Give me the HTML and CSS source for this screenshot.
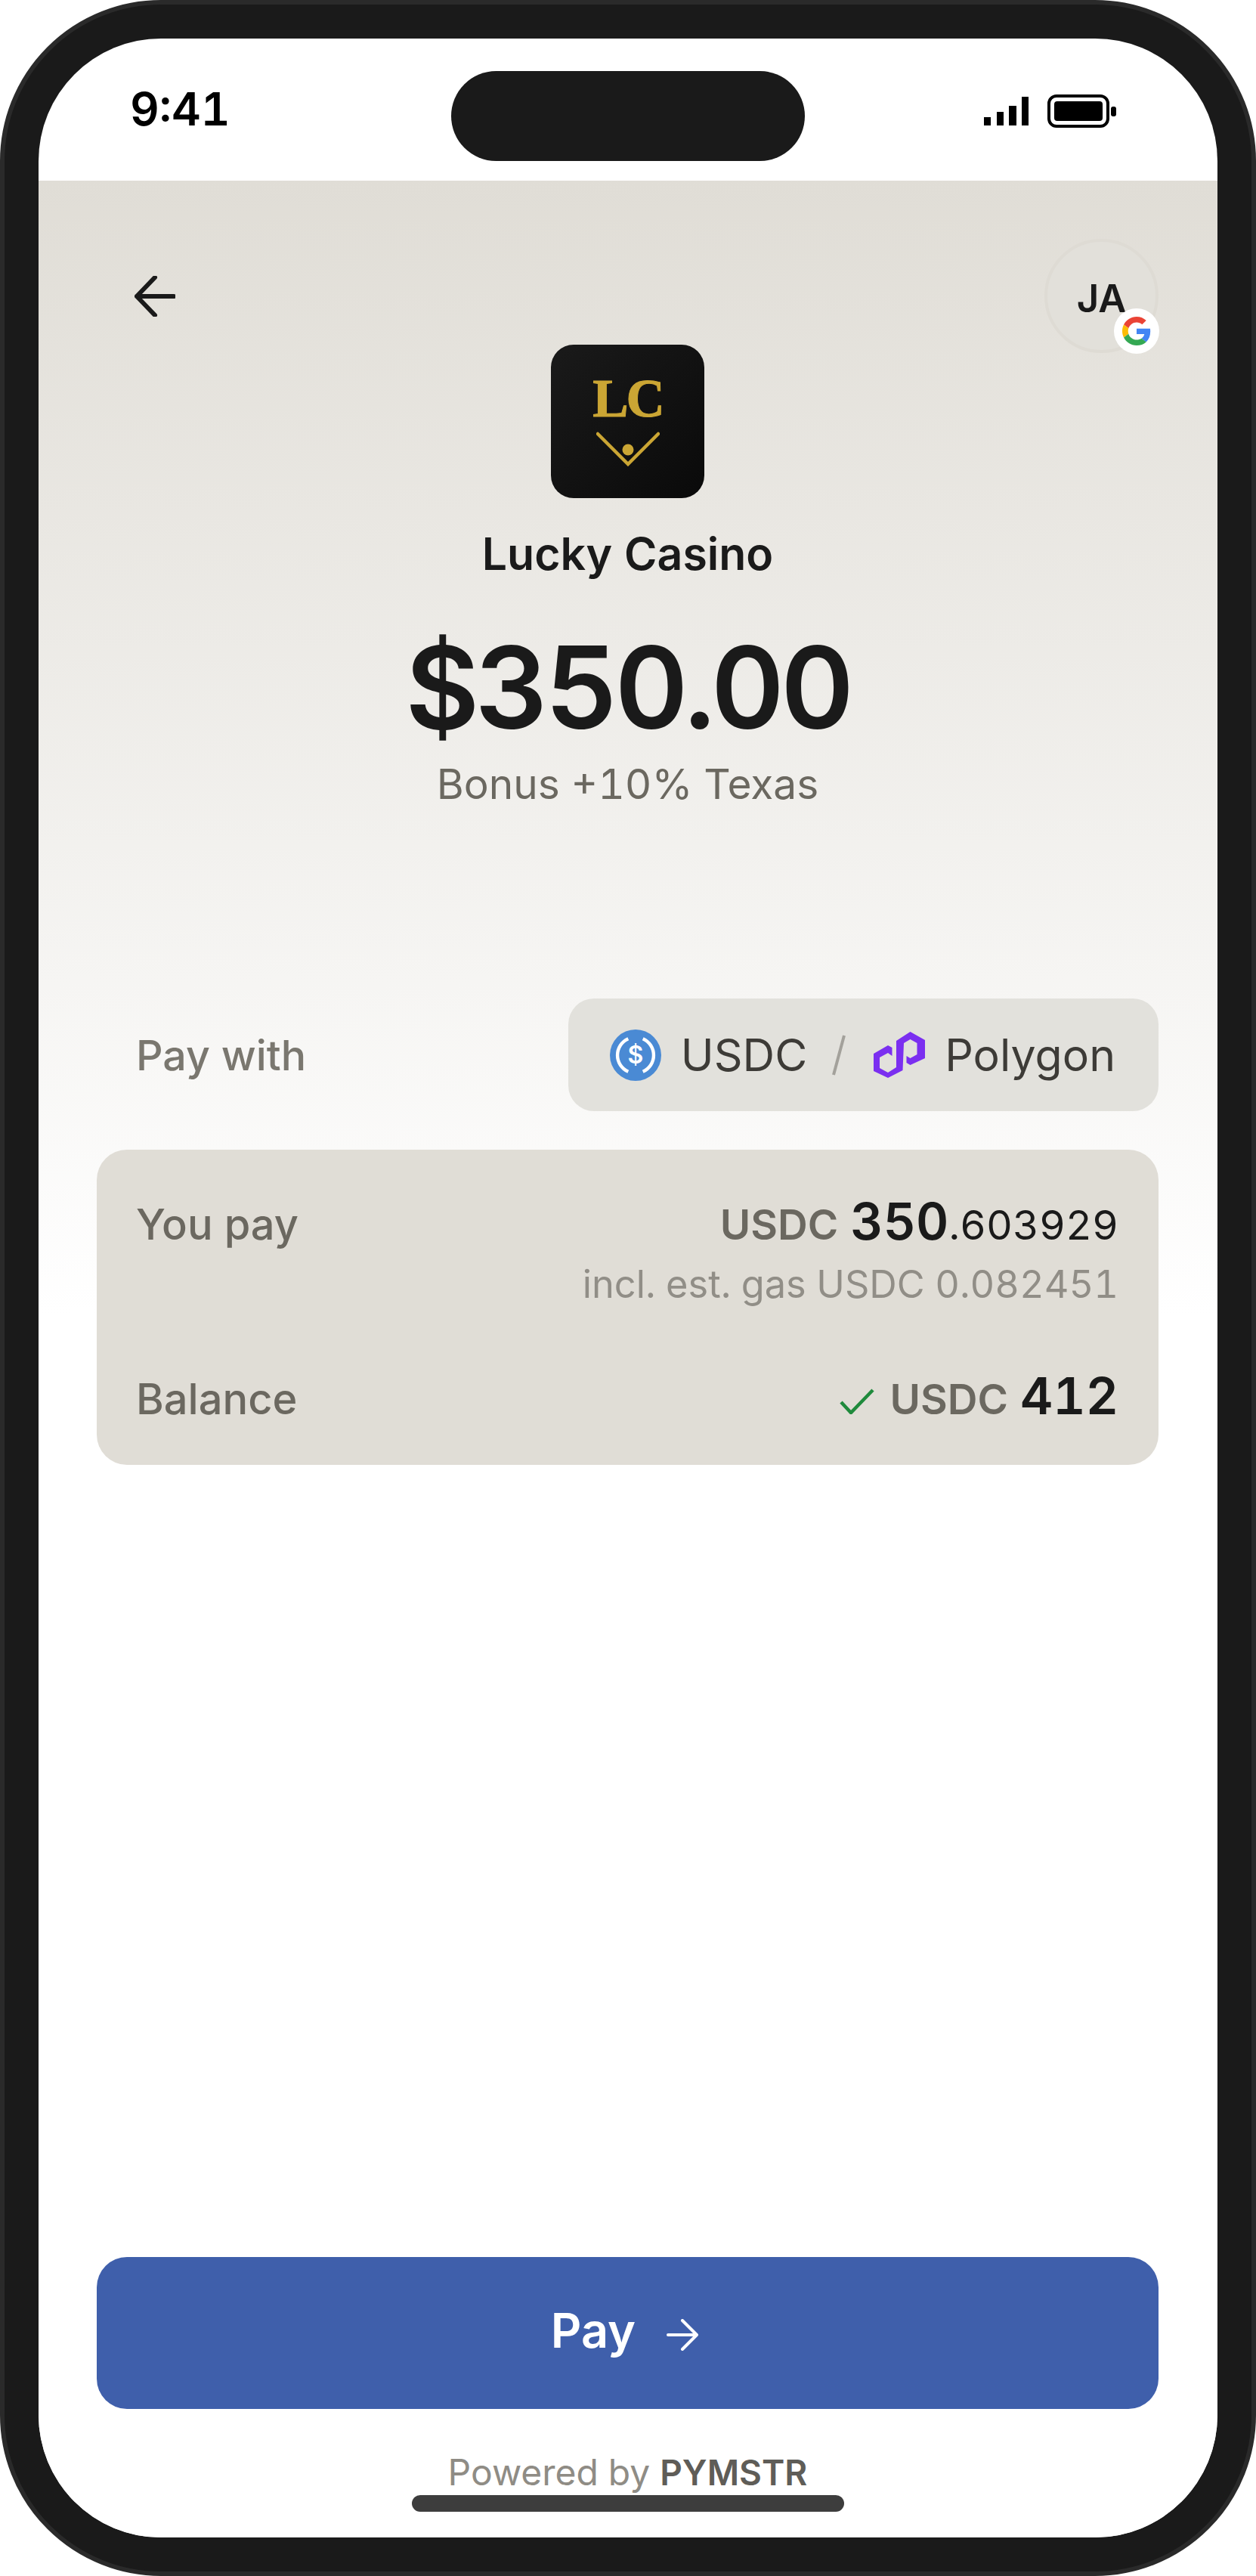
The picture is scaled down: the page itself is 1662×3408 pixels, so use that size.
FILE: index.html
```html
<!DOCTYPE html>
<html lang="en">
<head>
    <meta charset="UTF-8">
    <meta name="viewport" content="width=device-width, initial-scale=1.0">
    <title>Lucky Casino - Pay with PYMSTR</title>
    <link rel="stylesheet" href="styles.css">
</head>
<body>

<div class="phone">
    <div class="screen">
        <div class="status-bar">
            <span class="status-time">9:41</span>
            <div class="island"></div>
            <div class="status-icons">
                <svg class="signal-icon" width="60" height="40" viewBox="0 0 60 40">
                    <rect x="0" y="28" width="9" height="11" fill="#000"/>
                    <rect x="17" y="21" width="9" height="18" fill="#000"/>
                    <rect x="33" y="13" width="10" height="26" fill="#000"/>
                    <rect x="50" y="1" width="9" height="38" fill="#000"/>
                </svg>
                <svg class="battery-icon" width="91" height="44" viewBox="0 0 91 44">
                    <rect x="2" y="2" width="78" height="40" rx="10" fill="none" stroke="#000" stroke-width="4"/>
                    <rect x="9" y="9" width="64" height="26" rx="4" fill="#000"/>
                    <rect x="84" y="16" width="7" height="13" rx="3" fill="#000"/>
                </svg>
            </div>
        </div>

        <div class="checkout">
            <div class="top-row">
                <a class="back-link" href="javascript:void(0);">
                    <svg width="54" height="54" viewBox="0 0 54 54" fill="none" stroke="#1a1a1a" stroke-width="6" stroke-linecap="round" stroke-linejoin="round">
                        <path d="M52 27H3M27 2L3 27l24 25"/>
                    </svg>
                </a>
                <div class="avatar">
                    JA
                    <span class="google-badge">
                        <svg width="38" height="38" viewBox="0 0 48 48">
                            <path fill="#EA4335" d="M24 9.5c3.54 0 6.71 1.22 9.21 3.6l6.85-6.85C35.9 2.38 30.47 0 24 0 14.62 0 6.51 5.38 2.56 13.22l7.98 6.19C12.43 13.72 17.74 9.5 24 9.5z"/>
                            <path fill="#4285F4" d="M46.98 24.55c0-1.57-.15-3.09-.38-4.55H24v9.02h12.94c-.58 2.96-2.26 5.48-4.78 7.18l7.73 6c4.51-4.18 7.09-10.36 7.09-17.65z"/>
                            <path fill="#FBBC05" d="M10.53 28.59c-.48-1.45-.76-2.99-.76-4.59s.27-3.14.76-4.59l-7.98-6.19C.92 16.46 0 20.12 0 24c0 3.88.92 7.54 2.56 10.78l7.97-6.19z"/>
                            <path fill="#34A853" d="M24 48c6.48 0 11.93-2.13 16.03-5.81l-7.73-6c-2.15 1.45-4.92 2.3-8.3 2.3-6.26 0-11.57-4.22-13.47-9.91l-7.98 6.19C6.51 42.62 14.62 48 24 48z"/>
                        </svg>
                    </span>
                </div>
            </div>

            <div class="merchant">
                <div class="merchant-logo">
                    <span class="logo-letters">LC</span>
                    <svg class="logo-mark" width="84" height="46" viewBox="0 0 84 46" fill="none">
                        <path d="M2 3l40 40 40-40" stroke="#cba634" stroke-width="4.5" stroke-linecap="round"/>
                        <circle cx="42" cy="24" r="7.5" fill="#cba634"/>
                    </svg>
                </div>
                <div class="merchant-name">Lucky Casino</div>
                <div class="amount">$350.00</div>
                <div class="bonus">Bonus +10% Texas</div>
            </div>

            <div class="pay-with">
                <span class="pay-with-label">Pay with</span>
                <div class="token-pill">
                    <svg class="usdc-icon" width="68" height="68" viewBox="0 0 70 70">
                        <circle cx="35" cy="35" r="35" fill="#4a8ad4"/>
                        <path d="M25 12.5A24.6 24.6 0 0 0 25 57.5M45 12.5A24.6 24.6 0 0 1 45 57.5" fill="none" stroke="#fff" stroke-width="4.5"/>
                        <text x="35" y="46" text-anchor="middle" class="usdc-sign">$</text>
                    </svg>
                    <span class="token-name">USDC</span>
                    <span class="token-slash"></span>
                    <svg class="polygon-icon" width="68" height="61" viewBox="0 0 68 61">
                        <path fill="#7b2ff0" d="M48.5 0L68 11V35L48.5 44 43.5 41V32L48.5 35 57.5 30V15L48.5 10 40 15 38.5 51 19 61 0 52V29L19 18 24.5 21V32L19 28 8 34V48L19 54 30 47V12z"/>
                    </svg>
                    <span class="token-name">Polygon</span>
                </div>
            </div>

            <div class="summary-card">
                <div class="summary-row">
                    <span class="summary-label">You pay</span>
                    <div class="summary-value">
                        <span class="currency">USDC</span>
                        <span class="whole">350</span><span class="fraction">.603929</span>
                    </div>
                </div>
                <div class="gas-note">incl. est. gas USDC 0.082451</div>
                <div class="summary-row balance-row">
                    <span class="summary-label">Balance</span>
                    <div class="summary-value">
                        <svg class="check-icon" width="46" height="34" viewBox="0 0 46 34" fill="none">
                            <path d="M2 18l13 14L44 2" stroke="#1f8a3c" stroke-width="4.5"/>
                        </svg>
                        <span class="currency">USDC</span>
                        <span class="whole">412</span>
                    </div>
                </div>
            </div>

            <div class="spacer"></div>

            <button class="pay-button">
                Pay
                <svg width="42" height="42" viewBox="0 0 42 42" fill="none" stroke="#fff" stroke-width="4" stroke-linecap="round" stroke-linejoin="round">
                    <path d="M2 21h38M21 2l19 19-19 19"/>
                </svg>
            </button>

            <div class="powered">Powered by <strong>PYMSTR</strong></div>
        </div>

        <div class="home-indicator"></div>
    </div>
</div>

</body>
</html>
```

FILE: styles.css
```css
body {
    background-color: #ffffff;
    font-family: Inter, "Liberation Sans", sans-serif;
    font-variant-numeric: tabular-nums;
    margin: 0;
    padding: 0;
}

.phone {
    width: 1662px;
    height: 3408px;
    box-sizing: border-box;
    background-color: #1a1a1a;
    border: 6px solid #2a2a2a;
    border-radius: 213px;
    padding: 45px;
}

.screen {
    position: relative;
    height: 100%;
    display: flex;
    flex-direction: column;
    background-color: #ffffff;
    border-radius: 162px;
    overflow: hidden;
}

/* status bar */

.status-bar {
    display: grid;
    grid-template-columns: 1fr auto 1fr;
    height: 188px;
    flex: none;
}

.status-time {
    margin: 62px 0 0 121px;
    font-size: 60px;
    font-weight: 600;
    line-height: 62px;
    color: #000000;
}

.island {
    width: 468px;
    height: 119px;
    margin-top: 43px;
    background-color: #1a1a1a;
    border-radius: 60px;
}

.status-icons {
    display: flex;
    justify-content: flex-end;
    align-items: flex-start;
    gap: 24px;
    margin: 74px 134px 0 0;
}

.signal-icon {
    margin-top: 2px;
}

/* page */

.checkout {
    flex: 1;
    display: flex;
    flex-direction: column;
    padding: 77px 78px 0 77px;
    background: linear-gradient(#e0ddd6 0, #ffffff 1500px);
}

.top-row {
    display: flex;
    justify-content: space-between;
    align-items: center;
    margin-bottom: -11px;
}

.back-link {
    display: block;
    height: 54px;
    margin-left: 50px;
}

.avatar {
    position: relative;
    width: 151px;
    height: 151px;
    box-sizing: border-box;
    display: flex;
    align-items: center;
    justify-content: center;
    padding-top: 5px;
    border: 4px solid #dedbd4;
    border-radius: 50%;
    background-color: #e2e0da;
    color: #1a1a1a;
    font-size: 51px;
    font-weight: 600;
}

.google-badge {
    position: absolute;
    right: -5px;
    bottom: -5px;
    width: 60px;
    height: 60px;
    display: flex;
    align-items: center;
    justify-content: center;
    background-color: #ffffff;
    border-radius: 50%;
}

.merchant {
    display: flex;
    flex-direction: column;
    align-items: center;
}

.merchant-logo {
    width: 203px;
    height: 203px;
    display: flex;
    flex-direction: column;
    align-items: center;
    background: linear-gradient(135deg, #1a1a1a, #0a0a0a);
    border-radius: 30px;
}

.logo-letters {
    margin-top: 36px;
    font-family: "Liberation Serif", serif;
    font-size: 71px;
    font-weight: 700;
    line-height: 71px;
    letter-spacing: -3px;
    color: #cba634;
    -webkit-text-stroke: 1px #cba634;
}

.logo-mark {
    margin-top: 8px;
}

.merchant-name {
    margin-top: 38px;
    font-size: 59px;
    font-weight: 600;
    line-height: 72px;
    color: #1a1a1a;
}

.amount {
    margin-top: 60px;
    font-size: 151px;
    font-weight: 600;
    line-height: 160px;
    letter-spacing: -5.5px;
    color: #1a1a1a;
}

.bonus {
    margin-top: 13px;
    font-size: 55px;
    line-height: 70px;
    color: #6b6860;
}

/* pay with row */

.pay-with {
    display: flex;
    justify-content: space-between;
    align-items: center;
    margin-top: 249px;
    padding-left: 52px;
}

.pay-with-label {
    font-size: 55.5px;
    font-weight: 500;
    color: #7a776f;
}

.token-pill {
    display: flex;
    align-items: center;
    height: 149px;
    padding: 0 57px 0 55px;
    background-color: #e2e1dc;
    border-radius: 34px;
}

.usdc-sign {
    font-size: 33px;
    font-weight: 600;
    fill: #ffffff;
}

.token-name {
    margin-left: 26px;
    font-size: 59px;
    color: #3d3b37;
}

.token-slash {
    width: 4px;
    height: 54px;
    margin: 0 44px 0 40px;
    background-color: #a3a19b;
    transform: rotate(15deg);
}

/* summary card */

.summary-card {
    margin-top: 51px;
    height: 417px;
    box-sizing: border-box;
    padding: 54px 53px 0 52px;
    background-color: #e0ddd6;
    border-radius: 40px;
}

.summary-row {
    display: flex;
    justify-content: space-between;
    align-items: baseline;
}

.summary-label {
    font-size: 56px;
    font-weight: 500;
    color: #6b6860;
}

.summary-value {
    display: flex;
    align-items: baseline;
}

.currency {
    margin-right: 16px;
    font-size: 55px;
    font-weight: 600;
    color: #6b6860;
}

.whole {
    font-size: 67px;
    font-weight: 600;
    color: #1a1a1a;
}

.fraction {
    font-size: 54px;
    color: #1a1a1a;
}

.gas-note {
    margin-top: 12px;
    text-align: right;
    font-size: 50.5px;
    color: #918e87;
}

.balance-row {
    margin-top: 77px;
}

.check-icon {
    margin: 0 20px 10px 0;
}

.spacer {
    flex: 1;
}

.pay-button {
    display: flex;
    align-items: center;
    justify-content: center;
    gap: 41px;
    height: 201px;
    flex: none;
    padding: 0 8px 8px 0;
    background-color: #3f5fab;
    color: #ffffff;
    font-family: inherit;
    font-size: 63px;
    font-weight: 600;
    border: none;
    border-radius: 40px;
    cursor: pointer;
}

.pay-button svg {
    margin-top: 12px;
}

.powered {
    margin: 56px 0 58px;
    text-align: center;
    font-size: 48px;
    line-height: 56px;
    color: #8f8c85;
}

.powered strong {
    font-size: 46px;
    font-weight: 600;
    color: #5f5d58;
}

.home-indicator {
    position: absolute;
    left: 494px;
    bottom: 34px;
    width: 572px;
    height: 22px;
    background-color: #3d3d3d;
    border-radius: 11px;
}
```
